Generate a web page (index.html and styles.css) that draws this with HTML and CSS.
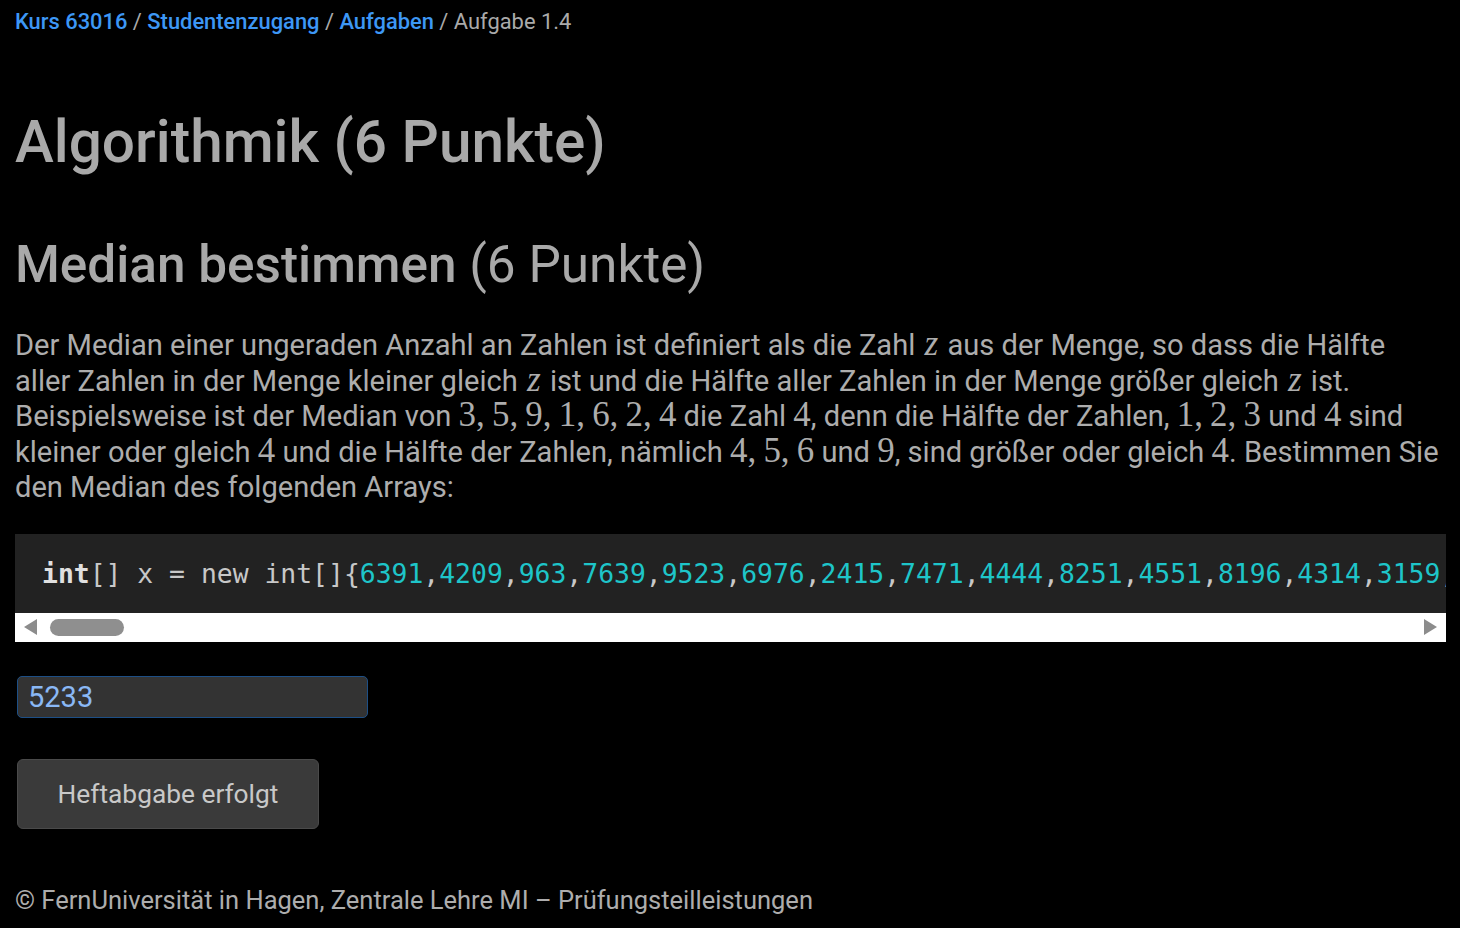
FILE: index.html
```html
<!DOCTYPE html>
<html lang="de">
<head>
<meta charset="utf-8">
<title>Aufgabe 1.4</title>
<link rel="stylesheet" href="styles.css">
</head>
<body>
<nav class="crumbs">
  <a href="#">Kurs 63016</a> <span class="sep">/</span>
  <a href="#">Studentenzugang</a> <span class="sep">/</span>
  <a href="#">Aufgaben</a> <span class="sep">/</span>
  <span class="current">Aufgabe 1.4</span>
</nav>
<main class="main">
  <h1 class="title">Algorithmik (6 Punkte)</h1>
  <h2 class="subtitle">Median bestimmen <span class="pts">(6 Punkte)</span></h2>
  <p class="text">Der Median einer ungeraden Anzahl an Zahlen ist definiert als die Zahl <span class="mi">z</span> aus der Menge, so dass die Hälfte aller&nbsp;Zahlen in der Menge kleiner gleich <span class="mi">z</span> ist und die Hälfte aller Zahlen in der Menge größer gleich <span class="mi">z</span> ist. Beispielsweise ist der Median von <span class="mn">3, 5, 9, 1, 6, 2, 4</span> die Zahl <span class="mn">4</span>, denn die Hälfte der Zahlen, <span class="mn">1, 2, 3</span> und <span class="mn">4</span> sind kleiner oder gleich <span class="mn">4</span> und die Hälfte der Zahlen, nämlich <span class="mn">4, 5, 6</span> und <span class="mn">9</span>, sind größer oder gleich <span class="mn">4</span>. Bestimmen Sie den Median des folgenden Arrays:</p>
  <div class="codebox">
    <pre class="code"><span class="kw">int</span>[] x = new int[]{<span class="num">6391</span>,<span class="num">4209</span>,<span class="num">963</span>,<span class="num">7639</span>,<span class="num">9523</span>,<span class="num">6976</span>,<span class="num">2415</span>,<span class="num">7471</span>,<span class="num">4444</span>,<span class="num">8251</span>,<span class="num">4551</span>,<span class="num">8196</span>,<span class="num">4314</span>,<span class="num">3159</span>,<span class="num">1284</span>,<span class="num">5233</span>,<span class="num">6620</span>};</pre>
    <div class="scrollbar">
      <span class="arrow arrow-left"></span>
      <span class="thumb"></span>
      <span class="track"></span>
      <span class="arrow arrow-right"></span>
    </div>
  </div>
  <div class="answer"><input class="field" type="text" value="5233"></div>
  <div class="actions"><button class="btn" type="button">Heftabgabe erfolgt</button></div>
</main>
<footer class="footer">© FernUniversität in Hagen, Zentrale Lehre MI – Prüfungsteilleistungen</footer>
</body>
</html>
```
FILE: styles.css
```css
html, body {
  margin: 0;
  padding: 0;
  background: #000;
}
body {
  font-family: Roboto, "Noto Sans", sans-serif;
  color: #adadad;
  padding: 0 14px 0 15px;
}
.crumbs {
  font-size: 21.9px;
  line-height: 24px;
  padding-top: 10px;
  color: #aaa;
}
.crumbs a {
  color: #3d97f5;
  font-weight: 500;
  text-decoration: none;
}
.crumbs .sep { color: #aaa; }
.main { display: flex; flex-direction: column; }
.title {
  font-size: 58.5px;
  font-weight: 500;
  line-height: 72px;
  margin: 72px 0 0;
  color: #a9a9a9;
}
.subtitle {
  font-size: 51.3px;
  font-weight: 500;
  line-height: 62px;
  margin: 56px 0 0;
  color: #a9a9a9;
}
.pts { font-weight: 400; }
.text {
  font-size: 29.1px;
  line-height: 35.6px;
  margin: 32px 0 0;
  max-width: 1432px;
  color: #adadad;
}
.mi {
  font-family: "Liberation Serif", serif;
  font-style: italic;
  font-size: 1.21em;
  line-height: 0;
  padding: 0 2px;
}
.mn {
  font-family: "Liberation Serif", serif;
  font-size: 1.2em;
  line-height: 0;
  word-spacing: -1.5px;
}
.codebox {
  margin-top: 28px;
  width: 1431px;
}
.code {
  margin: 0;
  background: #222;
  font-family: "DejaVu Sans Mono", monospace;
  font-size: 26.4px;
  line-height: 79px;
  padding: 0 0 0 27px;
  overflow: hidden;
  white-space: pre;
  color: #c8c8c8;
}
.kw { color: #e0e0e0; font-weight: bold; }
.num { color: #1ec5c9; }
.scrollbar {
  display: flex;
  align-items: center;
  background: #fff;
  height: 29px;
  padding: 0 9px;
  gap: 13px;
}
.arrow {
  width: 0;
  height: 0;
  border-top: 8px solid transparent;
  border-bottom: 8px solid transparent;
}
.arrow-left { border-right: 13px solid #8c8c8c; }
.arrow-right { border-left: 13px solid #8c8c8c; }
.thumb {
  width: 74px;
  height: 17px;
  border-radius: 9px;
  background: #8f8f8f;
}
.track { flex: 1; }
.answer { margin-top: 34px; padding-left: 2px; }
.field {
  box-sizing: border-box;
  width: 351px;
  height: 42px;
  background: #333;
  border: 1px solid #1d4f86;
  border-radius: 5px;
  color: #8ab8f5;
  font-family: Roboto, sans-serif;
  font-size: 29px;
  padding: 0 10px;
  outline: none;
}
.actions { margin-top: 41px; padding-left: 2px; }
.btn {
  box-sizing: border-box;
  width: 302px;
  height: 70px;
  background: #3a3a3a;
  border: 1px solid #4a4a4a;
  border-radius: 6px;
  color: #c8c8c8;
  font-family: Roboto, sans-serif;
  font-size: 26.3px;
  padding: 0;
}
.footer {
  margin-top: 56px;
  font-size: 25.5px;
  line-height: 30px;
  color: #adadad;
}
```
